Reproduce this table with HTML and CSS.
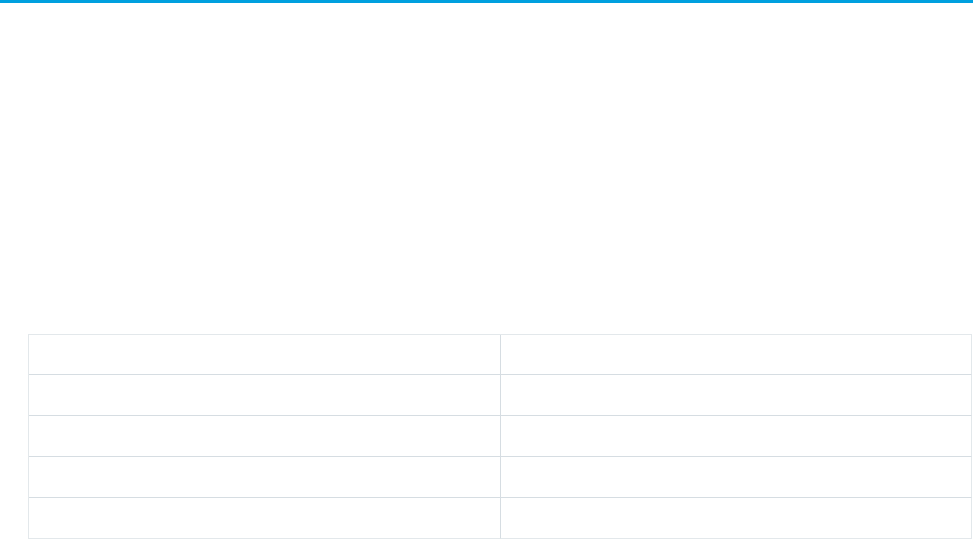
FILE: index.html
```html
<!DOCTYPE html>
<html lang="en">

<head>
    <meta charset="UTF-8">
    <meta name="viewport" content="width=device-width, initial-scale=1.0">
    <title>Table</title>
    <link rel="stylesheet" href="styles.css">
</head>

<body>
    <div class="top-bar"></div>

    <main class="content">
        <table class="data-table">
            <thead>
                <tr>
                    <th></th>
                    <th></th>
                </tr>
            </thead>
            <tbody>
                <tr>
                    <td></td>
                    <td></td>
                </tr>
                <tr>
                    <td></td>
                    <td></td>
                </tr>
                <tr>
                    <td></td>
                    <td></td>
                </tr>
                <tr>
                    <td></td>
                    <td></td>
                </tr>
            </tbody>
        </table>
    </main>
</body>

</html>
```

FILE: styles.css
```css
body {
    font-family: 'Liberation Sans', Arial, sans-serif;
    background: #fff;
    margin: 0;
    padding: 0;
    color: #333;
}

.top-bar {
    height: 3px;
    background: #00a0df;
}

.content {
    padding: 331px 0 0 28px;
}

.data-table {
    width: 944px;
    border-collapse: separate;
    border-spacing: 0;
    border-top: 1px solid #e3e8eb;
    border-left: 1px solid #e3e8eb;
    table-layout: fixed;
}

.data-table th,
.data-table td {
    box-sizing: border-box;
    height: 41px;
    padding: 0 12px;
    border-right: 1px solid #d6dde2;
    border-bottom: 1px solid #d6dde2;
    font-size: 14px;
    text-align: left;
}

.data-table th {
    height: 40px;
    font-weight: bold;
}

.data-table th:first-child,
.data-table td:first-child {
    width: 472px;
}

.data-table tr > :last-child {
    border-right-color: #e3e8eb;
}

.data-table tbody tr:last-child td {
    border-bottom-color: #e3e8eb;
}
```
